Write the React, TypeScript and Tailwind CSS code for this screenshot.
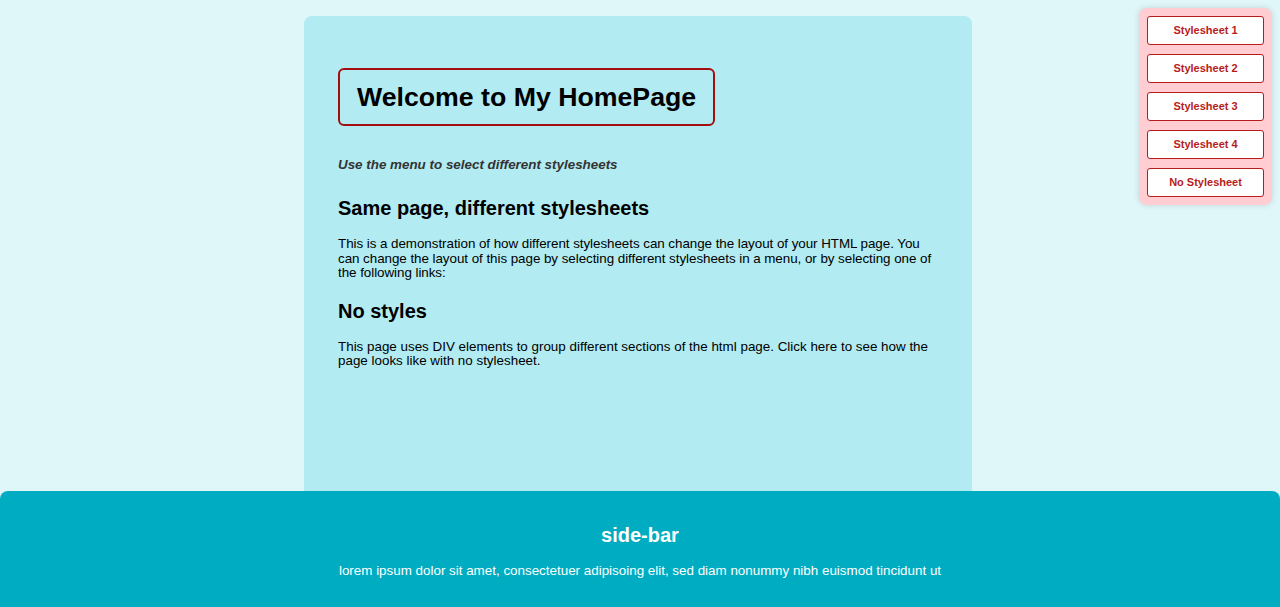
import React from "react";

export default function App() {
  const items = ["Stylesheet 1", "Stylesheet 2", "Stylesheet 3", "Stylesheet 4", "No Stylesheet"];
  return (
    <div className="relative min-h-[607px] bg-[#e0f7fa] font-['Liberation_Sans',Arial,sans-serif] text-black overflow-hidden">
      <div className="pt-4 flex justify-center pr-[4px]">
        <main className="w-[668px] h-[475px] bg-[#b2ebf2] rounded-t-lg px-[34px] pt-[52px]">
          <h1 className="inline-block border-2 border-[#a50e0e] rounded-md px-[17px] py-[9px] text-[26.7px] font-bold leading-[36px]">
            Welcome to My HomePage
          </h1>
          <p className="mt-[31px] text-[13.4px] font-bold italic text-[#333] leading-[16px]">
            Use the menu to select different stylesheets
          </p>
          <h2 className="mt-[23px] text-[20px] font-bold leading-[24px]">Same page, different stylesheets</h2>
          <p className="mt-[17px] text-[13.4px] leading-[14.5px] -mr-[20px] tracking-[-0.05px]">
            This is a demonstration of how different stylesheets can change the layout of your HTML page. You
            <br />
            can change the layout of this page by selecting different stylesheets in a menu, or by selecting one of
            <br />
            the following links:
          </p>
          <h2 className="mt-[18px] text-[20px] font-bold leading-[24px]">No styles</h2>
          <p className="mt-[17px] text-[13.4px] leading-[14.5px]">
            This page uses DIV elements to group different sections of the html page. Click here to see how the page
            looks like with no stylesheet.
          </p>
        </main>
      </div>
      <footer className="h-[116px] bg-[#00acc1] rounded-t-lg text-white flex flex-col items-center pt-[32px]">
        <h3 className="text-[20px] font-bold leading-[24px]">side-bar</h3>
        <p className="mt-[16px] text-[13.4px] leading-[16px]">
          lorem ipsum dolor sit amet, consectetuer adipisoing elit, sed diam nonummy nibh euismod tincidunt ut
        </p>
      </footer>
      <nav className="absolute top-2 right-2 w-[133px] bg-[#ffcdd2] rounded-lg shadow-[0_0_6px_rgba(0,0,0,0.15)] px-2 py-2 flex flex-col gap-[9px]">
        {items.map((t) => (
          <button
            key={t}
            className="h-[29px] bg-white border border-[#b71c1c] rounded-[3px] text-[#b71c1c] text-[11px] font-bold"
          >
            {t}
          </button>
        ))}
      </nav>
    </div>
  );
}
